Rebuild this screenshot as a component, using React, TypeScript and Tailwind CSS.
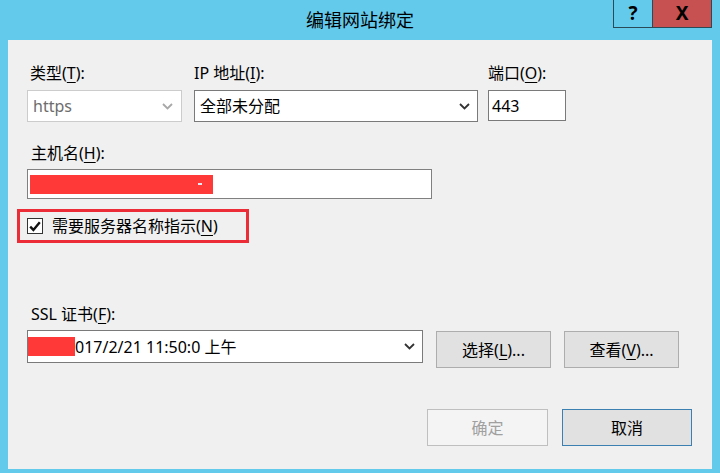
import React from 'react'

const font = { fontFamily: '"Noto Sans", "Noto Sans CJK SC", sans-serif' }

function Key({ k }: { k: string }) {
  return <span className="underline underline-offset-[3px] decoration-1">{k}</span>
}

function Chevron({ color }: { color: string }) {
  return (
    <svg width="11" height="7" viewBox="0 0 11 7" fill="none">
      <path d="M1 1l4.5 4.5L10 1" stroke={color} strokeWidth="1.8" />
    </svg>
  )
}

export default function App() {
  return (
    <div className="w-[720px] h-[473px] bg-[#64caec] flex flex-col text-black" style={font}>
      {/* title bar */}
      <div className="h-[40px] grid grid-cols-[1fr_auto_1fr]">
        <div />
        <div className="text-[18px] leading-[40px]">编辑网站绑定</div>
        <div className="flex justify-end items-start pr-[8px]">
          <div className="w-[39px] h-[28px] border border-t-0 border-r-0 border-[#2a4a57] flex items-center justify-center text-[19px] font-bold leading-none">
            ?
          </div>
          <div className="w-[60px] h-[28px] bg-[#c75050] border border-t-0 border-[#2a4a57] flex items-center justify-center text-[19px] font-bold leading-none">
            X
          </div>
        </div>
      </div>

      {/* client area */}
      <div className="ml-[8px] w-[704px] h-[429px] bg-[#f0f0f0] flex flex-col pl-[19px] text-[16px]">
        {/* row 1 */}
        <div className="mt-[22px] flex">
          <div className="flex flex-col w-[155px]">
            <div className="leading-[22px] pl-[3px]">类型(<Key k="T" />):</div>
            <div className="mt-[6px] h-[32px] bg-white border border-[#cccccc] flex items-center justify-between pl-[5px] pr-[8px] text-[#6d6d6d]">
              <span>https</span>
              <Chevron color="#a8a8a8" />
            </div>
          </div>
          <div className="flex flex-col w-[284px] ml-[12px]">
            <div className="leading-[22px]">IP 地址(<Key k="I" />):</div>
            <div className="mt-[6px] h-[32px] bg-white border border-[#7a7a7a] flex items-center justify-between pl-[5px] pr-[7px]">
              <span>全部未分配</span>
              <Chevron color="#333333" />
            </div>
          </div>
          <div className="flex flex-col w-[78px] ml-[10px]">
            <div className="leading-[22px]">端口(<Key k="O" />):</div>
            <div className="mt-[6px] h-[31px] bg-white border border-[#7a7a7a] flex items-center pl-[3px]">443</div>
          </div>
        </div>

        {/* host name */}
        <div className="mt-[20px] leading-[22px] pl-[4px]">主机名(<Key k="H" />):</div>
        <div className="mt-[5px] w-[405px] h-[30px] bg-white border border-[#808080] flex items-center pl-[2px]">
          <div className="w-[183px] h-[19px] bg-[#ff3838] flex items-center justify-end pr-[11px]">
            <div className="w-[4px] h-[2px] bg-[#dfe8f5]" />
          </div>
        </div>

        {/* SNI checkbox */}
        <div className="mt-[10px] -ml-[10px] w-[232px] h-[34px] border-[3px] border-[#ec2d38] flex items-center pl-[7px]">
          <div className="w-[16px] h-[16px] bg-white border border-[#333333] flex items-center justify-center">
            <svg width="12" height="11" viewBox="0 0 12 11" fill="none">
              <path d="M1.2 5.6l3.2 3.3L10.8 1.2" stroke="#111" strokeWidth="2.4" />
            </svg>
          </div>
          <div className="ml-[9px] leading-[22px]">需要服务器名称指示(<Key k="N" />)</div>
        </div>

        {/* SSL */}
        <div className="mt-[60px] leading-[22px] pl-[4px]">SSL 证书(<Key k="F" />):</div>
        <div className="mt-[5px] flex items-start">
          <div className="w-[396px] h-[33px] bg-white border border-[#7a7a7a] flex items-center justify-between pr-[7px]">
            <div className="flex items-center">
              <div className="w-[47px] h-[19px] bg-[#ff3838]" />
              <span>017/2/21 11:50:0 上午</span>
            </div>
            <Chevron color="#333333" />
          </div>
          <div className="ml-[13px] mt-[1px] w-[115px] h-[37px] bg-[#e1e1e1] border border-[#adadad] flex items-center justify-center">
            选择(<Key k="L" />)...
          </div>
          <div className="ml-[13px] mt-[1px] w-[115px] h-[37px] bg-[#e1e1e1] border border-[#adadad] flex items-center justify-center">
            查看(<Key k="V" />)...
          </div>
        </div>

        {/* dialog buttons */}
        <div className="mt-[41px] flex justify-end pr-[20px]">
          <div className="w-[121px] h-[37px] bg-[#f4f4f4] border border-[#bfbfbf] flex items-center justify-center text-[#a0a0a0]">
            确定
          </div>
          <div className="ml-[14px] w-[130px] h-[37px] bg-[#e1e1e1] border border-[#3c7fb1] flex items-center justify-center">
            取消
          </div>
        </div>
      </div>
    </div>
  )
}
